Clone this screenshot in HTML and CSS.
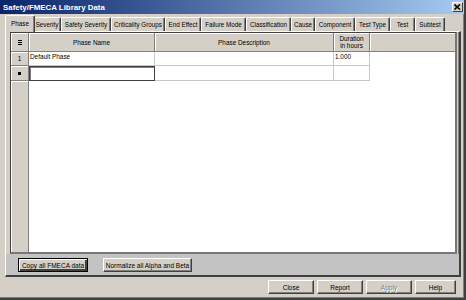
FILE: index.html
```html
<!DOCTYPE html>
<html>
<head>
<meta charset="utf-8">
<link rel="stylesheet" href="styles.css">
</head>
<body>
<div class="window">
  <div class="titlebar">
    <span class="title">Safety/FMECA Library Data</span>
    <span class="close"><svg width="7" height="6" viewBox="0 0 7 6"><path d="M0.5 0.5 L6 5.5 M6 0.5 L0.5 5.5" stroke="#000" stroke-width="1.6" fill="none"/></svg></span>
  </div>
  <div class="tabs">
    <div class="tab active">Phase</div>
    <div class="tab">Severity</div>
    <div class="tab">Safety Severity</div>
    <div class="tab">Criticality Groups</div>
    <div class="tab">End Effect</div>
    <div class="tab">Failure Mode</div>
    <div class="tab">Classification</div>
    <div class="tab">Cause</div>
    <div class="tab">Component</div>
    <div class="tab">Test Type</div>
    <div class="tab">Test</div>
    <div class="tab">Subtest</div>
  </div>
  <div class="panel">
    <div class="grid">
      <div class="ghead">
        <div class="corner"><span class="lines"></span></div>
        <div class="hcell c-name">Phase Name</div>
        <div class="hcell c-desc">Phase Description</div>
        <div class="hcell c-dur">Duration<br>in hours</div>
        <div class="hfill"></div>
      </div>
      <div class="grow">
        <div class="rh">1</div>
        <div class="cell c-name">Default Phase</div>
        <div class="cell c-desc"></div>
        <div class="cell c-dur">1.000</div>
      </div>
      <div class="grow tall">
        <div class="rh"><span class="star"></span></div>
        <div class="cell c-name edit"></div>
        <div class="cell c-desc"></div>
        <div class="cell c-dur"></div>
      </div>
      <div class="gfill"><div class="rh"></div></div>
    </div>
    <div class="strip">
      <button class="btn default copy">Copy all FMECA data</button>
      <button class="btn normalize">Normalize all Alpha and Beta</button>
    </div>
  </div>
  <div class="footer">
    <button class="btn fbtn">Close</button>
    <button class="btn fbtn">Report</button>
    <button class="btn fbtn disabled">Apply</button>
    <button class="btn fbtn help">Help</button>
  </div>
</div>
</body>
</html>
```
FILE: styles.css
```css
* { box-sizing: border-box; }
html, body { margin: 0; padding: 0; }
body {
  background: #d4d0c8;
  font-family: "Liberation Sans", Arial, sans-serif;
  font-size: 6.4px;
  color: #000;
}
.window {
  width: 466px;
  height: 300px;
  background: #d4d0c8;
  border-right: 2px solid #404040;
  border-bottom: 2px solid #404040;
  box-shadow: inset -1px -1px 0 #808080;
  display: flex;
  flex-direction: column;
}
.titlebar {
  height: 14px;
  background: linear-gradient(to right, #0a246a, #a6caf0);
  display: flex;
  align-items: center;
  justify-content: space-between;
  padding: 0 1px 0 3px;
}
.title {
  color: #fff;
  font-weight: bold;
  font-size: 7.9px;
}
.close {
  width: 11px;
  height: 10px;
  background: #d4d0c8;
  border: 1px solid;
  border-color: #fff #404040 #404040 #fff;
  display: flex;
  align-items: center;
  justify-content: center;
}
.close svg { display: block; }

.tabs {
  display: flex;
  margin: 3px 0 0 7px;
  height: 14px;
}
.tab {
  height: 14px;
  border-top: 1px solid #fff;
  border-left: 1px solid #fff;
  border-right: 1px solid #404040;
  box-shadow: inset -1px 0 0 #808080;
  border-radius: 2px 2px 0 0;
  display: flex;
  align-items: center;
  justify-content: center;
  font-size: 6.3px;
  white-space: nowrap;
}
.tab:nth-child(1) { width: 26px; }
.tab:nth-child(2) { width: 28px; }
.tab:nth-child(3) { width: 50px; }
.tab:nth-child(4) { width: 54px; }
.tab:nth-child(5) { width: 36px; }
.tab:nth-child(6) { width: 45px; }
.tab:nth-child(7) { width: 45px; }
.tab:nth-child(8) { width: 24px; }
.tab:nth-child(9) { width: 40px; }
.tab:nth-child(10) { width: 35px; }
.tab:nth-child(11) { width: 25px; }
.tab:nth-child(12) { width: 30px; }
.tab.active {
  width: 30px;
  margin: -2px -2px -1px -2px;
  height: 17px;
  background: #d4d0c8;
  position: relative;
  z-index: 1;
  padding-bottom: 2px;
}

.panel {
  margin-left: 5px;
  width: 456px;
  height: 246px;
  border-top: 1px solid #fff;
  border-left: 1px solid #fff;
  border-right: 2px solid #404040;
  border-bottom: 2px solid #404040;
  box-shadow: inset -1px -1px 0 #808080;
  display: flex;
  flex-direction: column;
}
.grid {
  margin-left: 4px;
  width: 447px;
  height: 222px;
  border-style: solid;
  border-width: 1px 2px 2px 1px;
  border-color: #404040 #777 #777 #404040;
  background: #fff;
  display: flex;
  flex-direction: column;
}
.ghead {
  display: flex;
  height: 19px;
  background: #d4d0c8;
}
.corner, .hcell, .hfill {
  height: 19px;
  border-right: 1px solid #808080;
  border-bottom: 1px solid #808080;
  box-shadow: inset 1px 1px 0 #fff;
  display: flex;
  align-items: center;
  justify-content: center;
  text-align: center;
  line-height: 7px;
}
.hfill { flex: 1; border-right: none; }
.corner { width: 18px; }
.lines {
  width: 4px;
  height: 5px;
  background: repeating-linear-gradient(to bottom, #000 0 1px, transparent 1px 2px);
}
.c-name { width: 126px; }
.c-desc { width: 179px; }
.c-dur { width: 36px; }

.grow {
  display: flex;
  height: 14px;
}
.grow.tall { height: 15px; }
.rh {
  width: 18px;
  background: #d4d0c8;
  border-right: 1px solid #808080;
  border-bottom: 1px solid #808080;
  box-shadow: inset 1px 1px 0 #fff;
  display: flex;
  align-items: center;
  justify-content: center;
}
.star {
  width: 3px;
  height: 3px;
  background: #000;
}
.cell {
  border-right: 1px solid #c8c8c8;
  border-bottom: 1px solid #c8c8c8;
  padding: 1px 0 0 1px;
  line-height: 7px;
  white-space: nowrap;
}
.cell.edit {
  border: 1px solid #404040;
  box-shadow: inset 1px 1px 0 #808080;
}
.gfill {
  flex: 1;
  display: flex;
}
.gfill .rh { border-bottom: none; }

.strip {
  flex: 1;
  background: #c3c3c3;
  display: flex;
  align-items: flex-start;
  padding: 4px 0 0 12px;
  gap: 15px;
}
.btn {
  font-family: "Liberation Sans", Arial, sans-serif;
  font-size: 6.5px;
  color: #000;
  height: 14px;
  padding: 0;
  margin: 0;
  background: #d4d0c8;
  border: 1px solid;
  border-color: #fff #404040 #404040 #fff;
  box-shadow: inset -1px -1px 0 #808080;
  border-radius: 0;
  display: flex;
  align-items: center;
  justify-content: center;
  white-space: nowrap;
}
.btn.default {
  border: 1px solid #000;
  box-shadow: inset 1px 1px 0 #fff, inset -2px -2px 0 #404040;
}
.copy { width: 70px; }
.normalize { width: 89px; }
.footer {
  display: flex;
  justify-content: flex-end;
  gap: 3px;
  padding: 3px 8px 0 0;
}
.fbtn { width: 46px; }
.fbtn.help { width: 41px; }
.disabled {
  color: #808080;
  text-shadow: 1px 1px 0 #fff;
}
```
